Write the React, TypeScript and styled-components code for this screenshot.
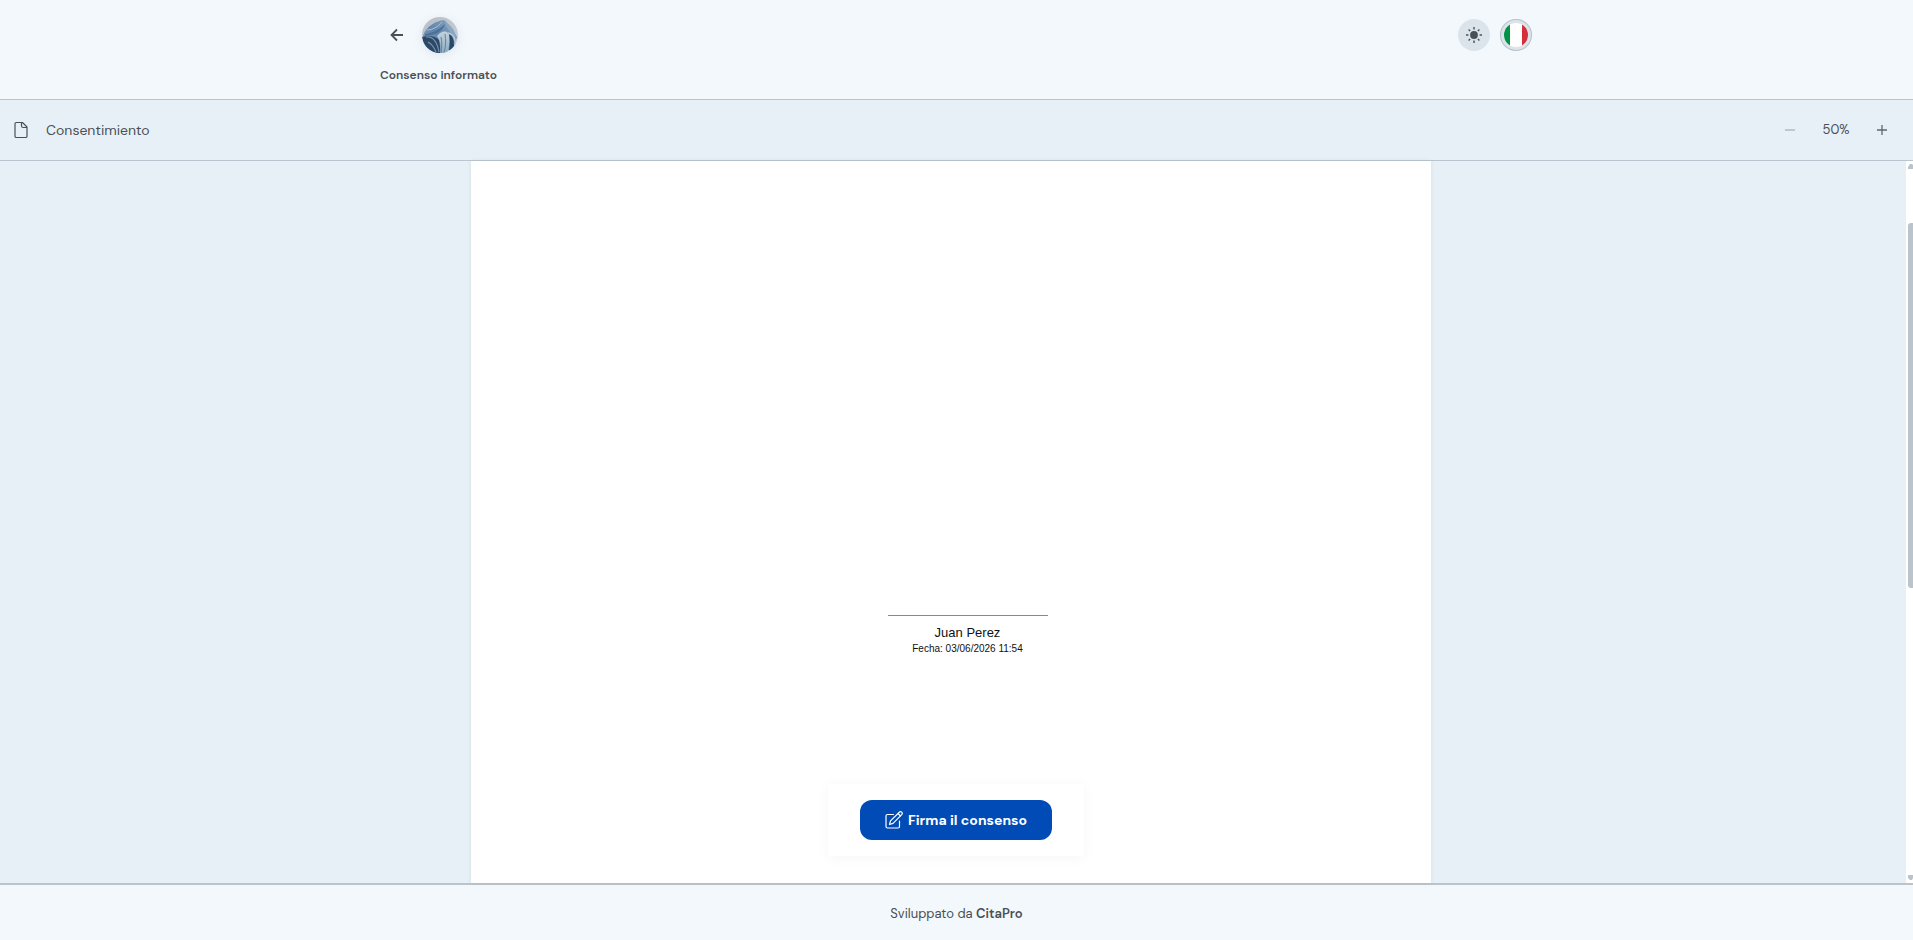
import React from "react";
import styled, { createGlobalStyle } from "styled-components";

const sans = `"DM Sans", Inter, "Liberation Sans", sans-serif`;

const GlobalStyle = createGlobalStyle`
  *, *::before, *::after { box-sizing: border-box; }
  body { margin: 0; background: #f3f8fc; color: #495057; font-family: ${sans}; }
  button { font: inherit; color: inherit; border: 0; padding: 0; background: none; cursor: pointer; }
  p, h1, h2 { margin: 0; }
`;

const Shell = styled.div`
  display: flex;
  flex-direction: column;
  height: 100vh;
`;

const Header = styled.header`
  padding: 17px 25px 16px 24px;
  border-bottom: 1px solid #bcc4cb;
`;

const HeaderInner = styled.div`
  max-width: 1152px;
  margin: 0 auto;
`;

const HeaderRow = styled.div`
  display: flex;
  align-items: center;
  justify-content: space-between;
`;

const Group = styled.div<{ $gap: number }>`
  display: flex;
  align-items: center;
  gap: ${(p) => p.$gap}px;
`;

const BackButton = styled.button`
  display: grid;
  place-items: center;
  width: 34px;
  height: 34px;
`;

const Avatar = styled.span`
  display: block;
  width: 36px;
  height: 36px;
  border-radius: 50%;
  overflow: hidden;
  box-shadow: 0 2px 10px rgba(90, 130, 170, 0.15);
  svg { display: block; }
`;

const RoundButton = styled.button<{ $ring?: boolean }>`
  display: grid;
  place-items: center;
  width: 32px;
  height: 32px;
  border-radius: 50%;
  background: #dce4eb;
  box-shadow: ${(p) => (p.$ring ? "inset 0 0 0 1px #bac3cb" : "none")};
`;

const PageTitle = styled.h1`
  margin-top: 14px;
  font-size: 12px;
  line-height: 16px;
  font-weight: 600;
`;

const Toolbar = styled.div`
  display: flex;
  align-items: center;
  justify-content: space-between;
  height: 61px;
  padding: 0 20px 0 12px;
  background: #e8f0f7;
  border-bottom: 1px solid #bcc4cf;
`;

const DocumentName = styled.h2`
  font-size: 14px;
  line-height: 20px;
  font-weight: 400;
`;

const ZoomButton = styled.button`
  display: grid;
  place-items: center;
  width: 22px;
  height: 32px;
  &:disabled { opacity: 0.45; cursor: default; }
`;

const ZoomValue = styled.span`
  width: 60px;
  font-size: 13px;
  line-height: 20px;
  text-align: center;
`;

const Main = styled.main`
  position: relative;
  flex: 1;
  min-height: 0;
  display: flex;
  background: #e8f0f7;
`;

const Viewer = styled.div`
  flex: 1;
  display: flex;
  justify-content: center;
  padding-right: 4px;
`;

const Sheet = styled.article`
  display: flex;
  flex-direction: column;
  align-items: center;
  width: 960px;
  max-width: 100%;
  padding: 454px 0 0 33px;
  background: #fff;
  box-shadow: 0 0 4px rgba(120, 150, 160, 0.2);
`;

const Signature = styled.div`
  width: 160px;
  padding-top: 8px;
  border-top: 1px solid #888;
  color: #111;
  font-family: "Liberation Sans", Arial, sans-serif;
  text-align: center;
`;

const Signer = styled.p`
  font-size: 13px;
  line-height: 18px;
`;

const SignedAt = styled.p`
  font-size: 10px;
  line-height: 14px;
`;

const ScrollTrack = styled.div`
  display: flex;
  flex-direction: column;
  justify-content: space-between;
  width: 7px;
  padding: 2px 0 2px 2px;
  background: #fff;
  svg { display: block; }
`;

const ScrollLane = styled.div`
  flex: 1;
  padding-top: 54px;
`;

const ScrollThumb = styled.div`
  height: 56%;
  border-radius: 3px 0 0 3px;
  background: #bac4cc;
`;

const ActionCard = styled.div`
  position: absolute;
  left: 0;
  right: 1px;
  bottom: 27px;
  margin: 0 auto;
  width: 256px;
  padding: 16px 32px;
  background: #fff;
  box-shadow: 0 2px 12px rgba(0, 0, 0, 0.04);
`;

const SignButton = styled.button`
  display: flex;
  align-items: center;
  justify-content: center;
  gap: 5px;
  width: 100%;
  height: 40px;
  border-radius: 12px;
  background: #004bb5;
  color: #fff;
  font-size: 14px;
  font-weight: 700;
  white-space: nowrap;
`;

const Footer = styled.footer`
  height: 57px;
  padding-top: 19px;
  border-top: 2px solid #bac4cc;
  font-size: 13px;
  line-height: 20px;
  text-align: center;
`;

const FooterLink = styled.a`
  color: inherit;
  font-weight: 600;
  text-decoration: none;
`;

const ArrowIcon = () => (
  <svg width="14" height="14" viewBox="0 0 14 14" fill="none" stroke="#495057" strokeWidth="1.8">
    <path d="M13 7H2M7 1.500 1.500 7 7 12.500" />
  </svg>
);

const AvatarArt = () => (
  <svg width="36" height="36" viewBox="0 0 36 36">
    <defs>
      <linearGradient id="sky" x1="0" y1="0" x2="1" y2="1">
        <stop offset="0" stopColor="#b9bec6" />
        <stop offset="1" stopColor="#c9cfd5" />
      </linearGradient>
      <linearGradient id="petal" x1="1" y1="0" x2="0" y2="1">
        <stop offset="0" stopColor="#8fabc8" />
        <stop offset="0.5" stopColor="#6285ab" />
        <stop offset="1" stopColor="#8fa9c3" />
      </linearGradient>
      <linearGradient id="fold" x1="0" y1="0" x2="0" y2="1">
        <stop offset="0" stopColor="#c3d3df" />
        <stop offset="1" stopColor="#8eabbd" />
      </linearGradient>
    </defs>
    <rect width="36" height="36" fill="url(#sky)" />
    <path d="M1 19C4 9 14 4 22 3c5 4 8 9 13 17l-4 12-16 4L4 30Z" fill="url(#petal)" />
    <path d="M3 17c7-1 14-4 20-10-2 7-9 11-20 12Z" fill="#4d7098" />
    <path d="M5 13c5 0 11-3 15-8" fill="none" stroke="#a9bfd6" />
    <path d="M0 20c7-2 13-1 17 3l2 13H9C4 33 1 27 0 20Z" fill="#2b4867" />
    <path d="M4 20c7-1 11 4 13 15M6 25c4 2 6 5 8 10" fill="none" stroke="#7593ae" strokeWidth="1.200" />
    <path d="M15 19c3-4 8-6 11-3 3 4 1 12 0 20h-8c1-6 1-11-3-17Z" fill="url(#fold)" />
    <path d="M19 20c1 5 1 10 0 16M23 17c1 6 1 12-1 19" fill="none" stroke="#6184a0" />
    <path d="M27 17c4 2 5 6 5 12l-5 5c1-6 1-12 0-17Z" fill="#27496a" />
    <path d="M26 16c6 1 8 5 7 13" fill="none" stroke="#b8cbd8" strokeWidth="1.500" />
    <path d="M23 5c6 3 10 8 11 15-5-3-9-8-11-15Z" fill="#8ba8c3" />
  </svg>
);

const SunIcon = () => (
  <svg width="18" height="18" viewBox="0 0 18 18" fill="none" stroke="#495057" strokeWidth="1.4">
    <circle cx="9" cy="9" r="3.9" fill="#495057" stroke="none" />
    <path d="M9 1v2.400M9 14.600V17M1 9h2.400M14.600 9H17M3.600 3.600l1.500 1.500M12.900 12.900l1.500 1.500M14.400 3.600l-1.500 1.500M5.100 12.900l-1.500 1.500" />
  </svg>
);

const FlagIcon = () => (
  <svg width="24" height="24" viewBox="0 0 24 24">
    <clipPath id="disc"><circle cx="12" cy="12" r="12" /></clipPath>
    <g clipPath="url(#disc)">
      <rect width="24" height="24" fill="#fff" />
      <rect width="6" height="24" fill="#009246" />
      <rect x="18" width="6" height="24" fill="#d62f3c" />
    </g>
  </svg>
);

const FileIcon = () => (
  <svg width="18" height="18" viewBox="0 0 18 18" fill="none" stroke="#495057" strokeWidth="1.200" strokeLinejoin="round">
    <path d="M10.500 1.500H4.300A1.300 1.300 0 0 0 3 2.800v12.400a1.300 1.300 0 0 0 1.300 1.300h9.400a1.300 1.300 0 0 0 1.300-1.300V6Z" />
    <path d="M9.500 1.500v3.200A1.800 1.800 0 0 0 11.300 6.500H15" />
  </svg>
);

const MinusIcon = () => (
  <svg width="10" height="10" viewBox="0 0 10 10"><path d="M0 5h10" stroke="#5d666e" strokeWidth="1.300" /></svg>
);

const PlusIcon = () => (
  <svg width="10" height="10" viewBox="0 0 10 10"><path d="M0 5h10M5 0v10" stroke="#5d666e" strokeWidth="1.300" /></svg>
);

const PencilIcon = () => (
  <svg width="18" height="18" viewBox="0 0 18 18" fill="none" stroke="#fff" strokeWidth="1.200" strokeLinejoin="round" strokeLinecap="round">
    <path d="M8.500 3.500h-6A1.500 1.500 0 0 0 1 5v10.500A1.500 1.500 0 0 0 2.500 17H13a1.500 1.500 0 0 0 1.500-1.500V10" />
    <path d="m4.500 13.500 1-3.600 8.800-8.700a1.500 1.500 0 0 1 2.400 2.400L8 12.400ZM13 2.500 15.500 5" />
  </svg>
);

const ScrollArrow = ({ down = false }: { down?: boolean }) => (
  <svg width="5" height="6" viewBox="0 0 5 6">
    <path d={down ? "M0 0h5v3L4 5H2L0 3Z" : "M0 6V4L2 1h2l1 1v4Z"} fill="#bac4cc" />
  </svg>
);

export default function App() {
  return (
    <Shell>
      <GlobalStyle />
      <Header>
        <HeaderInner>
          <HeaderRow>
            <Group $gap={8}>
              <BackButton aria-label="Indietro"><ArrowIcon /></BackButton>
              <Avatar><AvatarArt /></Avatar>
            </Group>
            <Group $gap={10}>
              <RoundButton aria-label="Tema"><SunIcon /></RoundButton>
              <RoundButton $ring aria-label="Lingua"><FlagIcon /></RoundButton>
            </Group>
          </HeaderRow>
          <PageTitle>Consenso informato</PageTitle>
        </HeaderInner>
      </Header>
      <Toolbar>
        <Group $gap={16}>
          <FileIcon />
          <DocumentName>Consentimiento</DocumentName>
        </Group>
        <Group $gap={5}>
          <ZoomButton disabled aria-label="Riduci"><MinusIcon /></ZoomButton>
          <ZoomValue>50%</ZoomValue>
          <ZoomButton aria-label="Ingrandisci"><PlusIcon /></ZoomButton>
        </Group>
      </Toolbar>
      <Main>
        <Viewer>
          <Sheet>
            <Signature>
              <Signer>Juan Perez</Signer>
              <SignedAt>Fecha: 03/06/2026 11:54</SignedAt>
            </Signature>
          </Sheet>
        </Viewer>
        <ScrollTrack aria-hidden="true">
          <ScrollArrow />
          <ScrollLane><ScrollThumb /></ScrollLane>
          <ScrollArrow down />
        </ScrollTrack>
        <ActionCard>
          <SignButton><PencilIcon />Firma il consenso</SignButton>
        </ActionCard>
      </Main>
      <Footer>
        Sviluppato da <FooterLink href="#">CitaPro</FooterLink>
      </Footer>
    </Shell>
  );
}
